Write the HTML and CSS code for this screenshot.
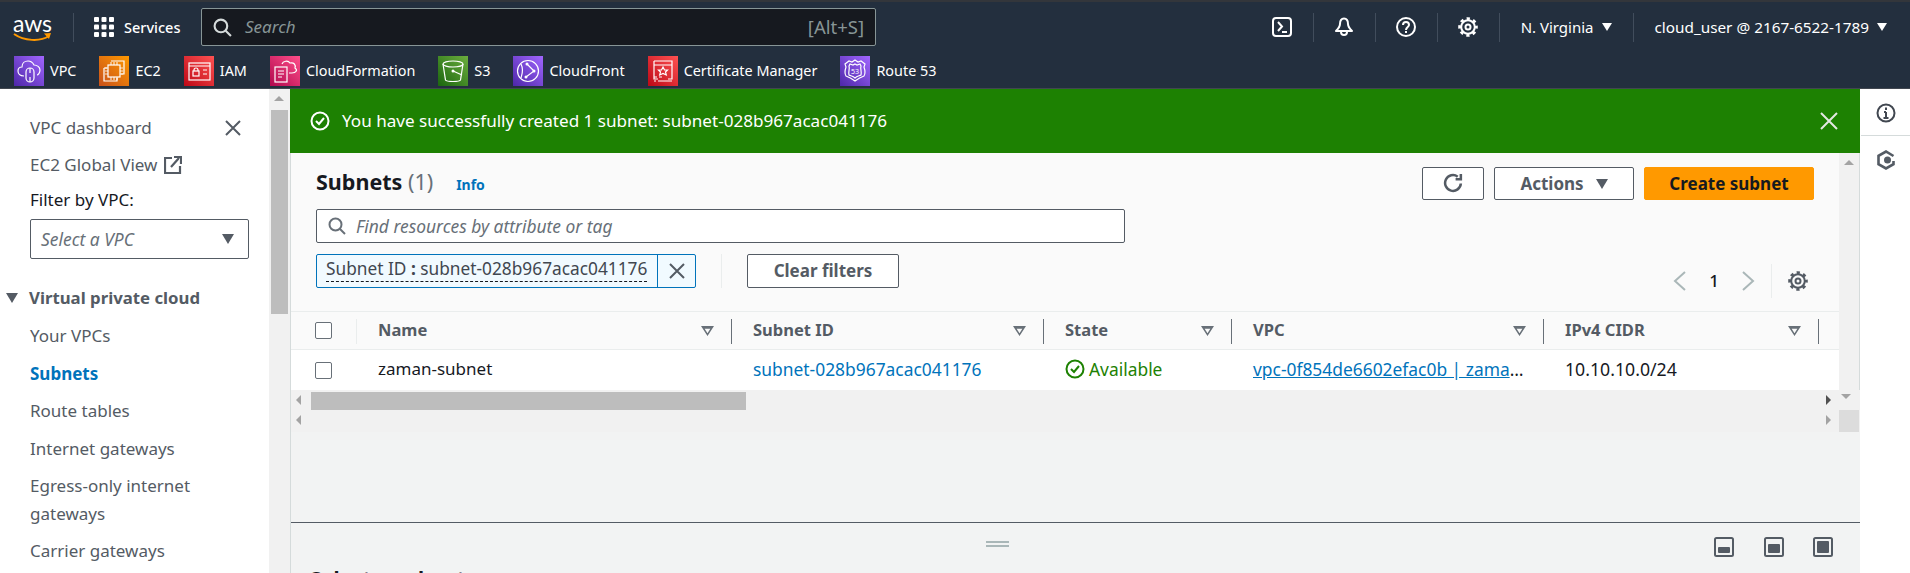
FILE: index.html
```html
<!DOCTYPE html>
<html lang="en">
<head>
<meta charset="utf-8">
<title>Subnets | VPC Console</title>
<link rel="stylesheet" href="styles.css">
</head>
<body>
<header class="top">
  <div class="top-main">
    <div class="aws-logo">
      <span class="aws-word">aws</span>
      <svg class="aws-smile" viewBox="0 0 40 12" width="40" height="12"><path d="M1 2c10 7 26 8 35 2" fill="none" stroke="#f90" stroke-width="2"/><path d="M31 1.500l7-.5-2 6z" fill="#f90"/></svg>
    </div>
    <span class="top-div div-logo"></span>
    <svg class="grid-icon" viewBox="0 0 20 20" width="20" height="20" fill="#fff"><rect x="0" y="0" width="5" height="5" rx="1"/><rect x="7.500" y="0" width="5" height="5" rx="1"/><rect x="15" y="0" width="5" height="5" rx="1"/><rect x="0" y="7.500" width="5" height="5" rx="1"/><rect x="7.500" y="7.500" width="5" height="5" rx="1"/><rect x="15" y="7.500" width="5" height="5" rx="1"/><rect x="0" y="15" width="5" height="5" rx="1"/><rect x="7.500" y="15" width="5" height="5" rx="1"/><rect x="15" y="15" width="5" height="5" rx="1"/></svg>
    <span class="services">Services</span>
    <div class="global-search">
      <svg viewBox="0 0 18 18" width="19" height="19" fill="none" stroke="#d5dbdb" stroke-width="2"><circle cx="7.500" cy="7.500" r="6"/><path d="M12 12l5 5"/></svg>
      <span class="gs-text">Search</span>
      <span class="gs-key">[Alt+S]</span>
    </div>
    <div class="top-right">
      <svg class="tool first" viewBox="0 0 20 20" width="20" height="20" fill="none" stroke="#fff" stroke-width="2"><rect x="1" y="1" width="18" height="18" rx="3"/><path d="M6 5l4 4.500L6 14M10 15h5"/></svg>
      <span class="top-div"></span>
      <svg class="tool" viewBox="0 0 20 20" width="20" height="20" fill="none" stroke="#fff" stroke-width="2"><path d="M10 1.500c-3 0-4 2.500-4 5.500 0 3-2 5-4 7h16c-2-2-4-4-4-7 0-3-1-5.500-4-5.500z" stroke-linejoin="round"/><path d="M7 15a3 3 0 0 0 6 0"/></svg>
      <span class="top-div"></span>
      <svg class="tool" viewBox="0 0 20 20" width="20" height="20" fill="none" stroke="#fff" stroke-width="2"><circle cx="10" cy="10" r="9"/><path d="M7 8c0-4 6-4 6 0 0 2-3 2-3 5"/><path d="M10 14v2"/></svg>
      <span class="top-div"></span>
      <svg class="tool" viewBox="0 0 20 20" width="20" height="20" fill="none" stroke="#fff"><circle cx="10" cy="10" r="6.800" stroke-width="2"/><circle cx="10" cy="10" r="8.300" stroke-width="3" stroke-dasharray="3.200 3.320" stroke-dashoffset="1.600"/><circle cx="10" cy="10" r="2.500" stroke-width="2"/></svg>
      <span class="top-div"></span>
      <span class="region">N. Virginia</span><span class="caret-w"></span>
      <span class="top-div acct-div"></span>
      <span class="acct">cloud_user @ 2167-6522-1789</span><span class="caret-w"></span>
    </div>
  </div>
  <nav class="fav">
    <a class="fav-item"><svg class="svc" viewBox="0 0 30 30" width="30" height="30"><defs><linearGradient id="gp" x1="0" y1="1" x2="1" y2="0"><stop offset="0" stop-color="#4d27a8"/><stop offset="1" stop-color="#a166ff"/></linearGradient><linearGradient id="go" x1="0" y1="1" x2="1" y2="0"><stop offset="0" stop-color="#c8511b"/><stop offset="1" stop-color="#f90"/></linearGradient><linearGradient id="gr" x1="0" y1="1" x2="1" y2="0"><stop offset="0" stop-color="#bd0816"/><stop offset="1" stop-color="#ff5252"/></linearGradient><linearGradient id="gm" x1="0" y1="1" x2="1" y2="0"><stop offset="0" stop-color="#b0084d"/><stop offset="1" stop-color="#ff4f8b"/></linearGradient><linearGradient id="gg" x1="0" y1="1" x2="1" y2="0"><stop offset="0" stop-color="#1b660f"/><stop offset="1" stop-color="#6cae3e"/></linearGradient></defs><rect width="30" height="30" fill="url(#gp)"/><g fill="none" stroke="#fff" stroke-width="1.200"><path d="M10 20c-4 0-6-2-6-5s2-4 4-4c0-4 3-6 6-6 3 0 5 2 6 4 3 0 6 2 6 5s-2 5-3 5"/><rect x="12" y="12" width="8" height="14" rx="4"/><path d="M16 12v5M16 21v5"/></g></svg><span>VPC</span></a>
    <a class="fav-item g-ec2"><svg class="svc" viewBox="0 0 30 30" width="30" height="30"><rect width="30" height="30" fill="url(#go)"/><g fill="none" stroke="#fff" stroke-width="1.200"><path d="M12 5h13v13h-3M5 12h3M5 12v13h13v-3"/><rect x="9" y="9" width="12" height="12"/><path d="M12 9V6M15 9V6M18 9V6M12 24v-3M15 24v-3M18 24v-3M9 12H6M9 15H6M9 18H6M21 12h3M21 15h3M21 18h3" opacity=".8"/></g></svg><span>EC2</span></a>
    <a class="fav-item g-iam"><svg class="svc" viewBox="0 0 30 30" width="30" height="30"><rect width="30" height="30" fill="url(#gr)"/><g fill="none" stroke="#fff" stroke-width="1.200"><rect x="5" y="7" width="21" height="17"/><path d="M5 10h21M19 14h4M19 18h4"/><rect x="9" y="15" width="6" height="5"/><path d="M10 15v-1a2 2 0 0 1 4 0v1"/></g></svg><span>IAM</span></a>
    <a class="fav-item g-cf"><svg class="svc" viewBox="0 0 30 30" width="30" height="30"><rect width="30" height="30" fill="url(#gm)"/><g fill="none" stroke="#fff" stroke-width="1.200"><rect x="5" y="11" width="12" height="15"/><path d="M8 15h6M8 18h6M8 21h4"/><path d="M12 8c1-3 6-4 8-1 4-1 6 2 5 5 3 2 1 5-3 5h-3"/></g></svg><span>CloudFormation</span></a>
    <a class="fav-item g-s3"><svg class="svc" viewBox="0 0 30 30" width="30" height="30"><rect width="30" height="30" fill="url(#gg)"/><g fill="none" stroke="#fff" stroke-width="1.200"><ellipse cx="15" cy="8" rx="10" ry="3"/><path d="M5 8l2.500 16c1 2 14 2 15 0L25 8"/><path d="M15 15l9 4"/></g><circle cx="15" cy="15" r="1.500" fill="#fff"/></svg><span>S3</span></a>
    <a class="fav-item g-cdn"><svg class="svc" viewBox="0 0 30 30" width="30" height="30"><rect width="30" height="30" fill="url(#gp)"/><g fill="none" stroke="#fff" stroke-width="1.200"><circle cx="15" cy="15" r="10.500"/><path d="M8 8c3 6 1 10 0 14M14 8l7 7-8 6"/></g><g fill="#fff"><circle cx="14" cy="8" r="1.500"/><circle cx="21" cy="15" r="1.500"/><circle cx="13" cy="21" r="1.500"/></g></svg><span>CloudFront</span></a>
    <a class="fav-item g-acm"><svg class="svc" viewBox="0 0 30 30" width="30" height="30"><rect width="30" height="30" fill="url(#gr)"/><g fill="none" stroke="#fff" stroke-width="1.200"><path d="M6 5h18v18h-4M6 9h18M10 23H6V5"/><path d="M15 11l1.500 3h3l-2 2 .8 3-3.300-1.500L11.700 19l.8-3-2-2h3z"/><path d="M6 21h3M11 21h3M6 25h2M10 25h14"/></g></svg><span>Certificate Manager</span></a>
    <a class="fav-item g-r53"><svg class="svc" viewBox="0 0 30 30" width="30" height="30"><rect width="30" height="30" fill="url(#gp)"/><g fill="none" stroke="#fff" stroke-width="1.200"><path d="M15 4l3 2 3-1 4 3-1 3c1 3 2 6 0 9-3 1-5 2-9 5-4-3-6-4-9-5-2-3-1-6 0-9L5 8l4-3 3 1z"/><path d="M15 8l2 1 3-1 1 2c-1 3 1 6 0 9-2 1-4 1-6 3-2-2-4-2-6-3-1-3 1-6 0-9l1-2 3 1z"/></g><text x="15" y="18" class="r53-num">53</text></svg><span>Route 53</span></a>
  </nav>
</header>

<div class="layout">
  <aside class="side">
    <div class="side-top">
      <a class="side-link">VPC dashboard</a>
      <svg class="x-big" viewBox="0 0 16 16" width="16" height="16" fill="none" stroke="#545b64" stroke-width="2"><path d="M1 1l14 14M15 1L1 15"/></svg>
    </div>
    <a class="side-link ext">EC2 Global View
      <svg viewBox="0 0 18 18" width="18" height="18" fill="none" stroke="#545b64" stroke-width="2.200"><path d="M8 2H1v15h15v-7"/><path d="M7 11l8-9M10 1h7v7" /></svg>
    </a>
    <label class="filter-label">Filter by VPC:</label>
    <div class="vpc-select"><span>Select a VPC</span><i class="caret-d"></i></div>
    <div class="side-head"><i class="caret-d"></i>Virtual private cloud</div>
    <a class="side-link sub">Your VPCs</a>
    <a class="side-link sub current">Subnets</a>
    <a class="side-link sub">Route tables</a>
    <a class="side-link sub">Internet gateways</a>
    <a class="side-link sub two">Egress-only internet gateways</a>
    <a class="side-link sub">Carrier gateways</a>
  </aside>
  <div class="side-scroll"><i class="arr up"></i><div class="side-thumb"></div></div>

  <main class="main">
    <div class="flash">
      <svg viewBox="0 0 20 20" width="20" height="20" fill="none" stroke="#fff" stroke-width="2"><circle cx="10" cy="10" r="8.500"/><path d="M6 10l3 3 5-6"/></svg>
      <span class="flash-text">You have successfully created 1 subnet: subnet-028b967acac041176</span>
      <svg class="flash-x" viewBox="0 0 18 18" width="18" height="18" fill="none" stroke="#e3e8e3" stroke-width="2"><path d="M1 1l16 16M17 1L1 17"/></svg>
    </div>
    <div class="pane">
      <div class="port">
        <section class="content">
          <div class="head">
            <div class="title-row">
              <h1 class="title">Subnets <span class="count">(1)</span></h1>
              <a class="info">Info</a>
            </div>
            <div class="actions">
              <button class="btn btn-refresh"><svg viewBox="0 0 20 20" width="21" height="21" fill="none" stroke="#545b64" stroke-width="2.400"><path d="M17 10a7.500 7.500 0 1 1-3-6.500"/><path d="M17 1v5h-5" fill="none"/></svg></button>
              <button class="btn btn-actions">Actions<i class="caret-d"></i></button>
              <button class="btn btn-primary">Create subnet</button>
            </div>
          </div>
          <div class="find">
            <svg viewBox="0 0 18 18" width="18" height="18" fill="none" stroke="#687078" stroke-width="2"><circle cx="7.500" cy="7.500" r="6"/><path d="M12 12l5 5"/></svg>
            <span>Find resources by attribute or tag</span>
          </div>
          <div class="filters">
            <div class="chip">
              <div class="chip-text"><span class="chip-label">Subnet ID <b>:</b> subnet-028b967acac041176</span></div>
              <span class="chip-x"><svg viewBox="0 0 16 16" width="16" height="16" fill="none" stroke="#545b64" stroke-width="2"><path d="M1 1l14 14M15 1L1 15"/></svg></span>
            </div>
            <span class="vsep"></span>
            <button class="btn btn-clear">Clear filters</button>
            <div class="pager">
              <svg viewBox="0 0 14 20" width="14" height="20" fill="none" stroke="#aab7b8" stroke-width="2"><path d="M12 1L2 10l10 9"/></svg>
              <span class="page-num">1</span>
              <svg viewBox="0 0 14 20" width="14" height="20" fill="none" stroke="#aab7b8" stroke-width="2"><path d="M2 1l10 9-10 9"/></svg>
              <span class="vsep pager-sep"></span>
              <svg viewBox="0 0 20 20" width="20" height="20" fill="none" stroke="#545b64"><circle cx="10" cy="10" r="6.800" stroke-width="2"/><circle cx="10" cy="10" r="8.300" stroke-width="3" stroke-dasharray="3.200 3.320" stroke-dashoffset="1.600"/><circle cx="10" cy="10" r="2.500" stroke-width="2"/></svg>
            </div>
          </div>
          <div class="thead tgrid">
            <div class="cell cell-check"><span class="cbx"></span></div>
            <div class="cell th">Name<i class="sort"></i></div>
            <div class="cell th">Subnet ID<i class="sort"></i></div>
            <div class="cell th">State<i class="sort"></i></div>
            <div class="cell th">VPC<i class="sort"></i></div>
            <div class="cell th">IPv4 CIDR<i class="sort"></i></div>
          </div>
          <div class="trow tgrid">
            <div class="cell cell-check"><span class="cbx"></span></div>
            <div class="cell">zaman-subnet</div>
            <div class="cell cell-wide"><a class="lnk">subnet-028b967acac041176</a></div>
            <div class="cell cell-wide ok"><svg viewBox="0 0 20 20" width="20" height="20" fill="none" stroke="#1d8102" stroke-width="2"><circle cx="10" cy="10" r="8.500"/><path d="M6 10l3 3 5-6"/></svg>Available</div>
            <div class="cell cell-wide"><a class="lnk under">vpc-0f854de6602efac0b | zama</a>…</div>
            <div class="cell cell-cidr">10.10.10.0/24</div>
          </div>
        </section>
        <div class="v-track"><i class="arr up"></i></div>
      </div>
      <div class="h-bars">
        <div class="h-bar"><i class="arr lt"></i><div class="h-thumb"></div><i class="arr rt dark"></i><i class="arr dn"></i></div>
        <div class="h-bar second"><i class="arr lt"></i><i class="arr rt"></i><span class="corner"></span></div>
      </div>
    </div>
    <section class="split">
      <div class="grip"></div>
      <div class="split-icons">
        <svg viewBox="0 0 20 20" width="20" height="20"><rect x="1" y="1" width="18" height="18" rx="1.500" fill="none" stroke="#545b64" stroke-width="2"/><rect x="4" y="10" width="12" height="6" rx="1" fill="#545b64"/></svg>
        <svg viewBox="0 0 20 20" width="20" height="20"><rect x="1" y="1" width="18" height="18" rx="1.500" fill="none" stroke="#545b64" stroke-width="2"/><rect x="4" y="7" width="12" height="9" rx="1" fill="#545b64"/></svg>
        <svg viewBox="0 0 20 20" width="20" height="20"><rect x="1" y="1" width="18" height="18" rx="1.500" fill="none" stroke="#545b64" stroke-width="2"/><rect x="4" y="4" width="12" height="12" rx="1" fill="#545b64"/></svg>
      </div>
      <div class="split-title">Select a subnet</div>
    </section>
  </main>

  <aside class="rail">
    <div class="rail-cell">
      <svg viewBox="0 0 20 20" width="20" height="20" fill="none" stroke="#414750" stroke-width="2"><circle cx="10" cy="10" r="8.500"/><path d="M10 9v6M7.500 15h5M8 9h2" /><path d="M10 4.500v2.500"/></svg>
    </div>
    <div class="rail-cell">
      <svg viewBox="0 0 20 20" width="20" height="20" fill="none" stroke="#545b64" stroke-width="2.600"><path d="M17.500 6L10 1.500 2.500 5.800v8.400L10 18.500l7.500-4.300V11"/><circle cx="11.500" cy="10" r="3.500" fill="#545b64" stroke="none"/></svg>
    </div>
  </aside>
</div>
</body>
</html>
```

FILE: styles.css
```css
* { box-sizing: border-box; }
html, body { margin: 0; height: 573px; overflow: hidden; }
body { background: #fff; color: #16191f; font: 400 17px/20px "Noto Sans", "Open Sans", sans-serif; }
svg { display: block; flex: none; }
i { display: block; flex: none; }
button { font: inherit; background: #fff; padding: 0; cursor: pointer; }

.top { height: 89px; background: #232f3e; border-top: 2px solid #33363b; color: #fff; border-bottom: 1px solid #414750; }
.top-main { display: flex; align-items: center; height: 44px; padding: 6px 0 0 13px; }
.aws-logo { width: 40px; height: 30px; position: relative; }
.aws-word { display: block; font: 400 23px/22px "Lato", sans-serif; color: #fff; letter-spacing: -.2px; }
.aws-smile { position: absolute; left: 0; top: 20px; }
.top-div { display: block; width: 1px; height: 29px; background: #414d5c; flex: none; }
.div-logo { margin: 0 20px; }
.grid-icon { margin-right: 10px; }
.services { font-size: 14.500px; width: 77px; font-weight: 500; }
.global-search { width: 675px; height: 38px; background: #16191f; border: 1px solid #879596; border-radius: 2px; display: flex; align-items: center; padding: 0 11px; color: #879596; font-size: 17px; }
.gs-text { margin-left: 13px; font-style: italic; flex: 1; }
.gs-key { color: #879596; font-size: 18.500px; }
.top-right { display: flex; align-items: center; margin-left: auto; font-size: 15.300px; padding-right: 23px; }
.tool { margin: 0 20.500px; }
.tool.first { margin-left: 0; }
.region { margin-left: 21px; font-size: 15px; }
.caret-w { width: 0; height: 0; border: 5px solid transparent; border-top: 8px solid #fff; border-bottom: 0; margin-left: 8px; }
.acct-div { margin-left: 21px; }
.acct { margin-left: 21px; }

.fav { display: flex; height: 42px; padding: 10px 0 0 14px; gap: 0; }
.fav-item { display: flex; align-items: center; gap: 6px; color: #fff; font-size: 14.400px; margin-right: 23px; height: 30px; }
.r53-num { font: 400 7px "Noto Sans", sans-serif; fill: #fff; text-anchor: middle; }

.layout { display: flex; height: 484px; }
.side { width: 269px; flex: none; padding: 18px 20px 0 30px; color: #545b64; }
.side-top { display: flex; justify-content: space-between; align-items: center; padding-right: 8px; height: 22px; margin-bottom: 15px; margin-top: 10px; }
.side-link { display: block; font-size: 17px; line-height: 22px; }
.side-link.ext { display: flex; gap: 7px; align-items: center; }
.filter-label { display: block; color: #16191f; margin: 13px 0 8px; font-size: 17px; line-height: 22px; }
.vpc-select { width: 219px; height: 40px; border: 1px solid #545b64; border-radius: 2px; display: flex; justify-content: space-between; align-items: center; padding: 0 14px 0 10px; font-style: italic; font-size: 17.400px; color: #687078; margin-bottom: 28px; }
.caret-d { width: 0; height: 0; border: 6px solid transparent; border-top: 10px solid #545b64; border-bottom: 0; }
.side-head { display: flex; align-items: center; gap: 11px; margin-left: -24px; font-weight: 700; font-size: 16.800px; line-height: 22px; margin-bottom: 16px; white-space: nowrap; }
.sub { margin-bottom: 15.500px; }
.sub.current { color: #0073bb; font-weight: 700; }
.sub.two { line-height: 28px; margin-top: -3.500px; margin-bottom: 12px; }
.side-scroll { width: 21px; flex: none; background: #f1f1f1; padding: 0 1px 0 2px; position: relative; }
.side-thumb { position: absolute; left: 2px; top: 21px; width: 17px; height: 204px; background: #bdbdbd; }
.arr { position: absolute; width: 0; height: 0; border: 5px solid transparent; }
.arr.up { left: 5px; top: 7px; border-bottom: 5px solid #a3a3a3; border-top: 0; }

.main { flex: none; width: 1570px; display: flex; flex-direction: column; border-left: 1px solid #d5dbdb; background: #f2f3f3; }
.flash { height: 64px; margin-left: -1px; background: #1d8102; display: flex; align-items: center; padding: 0 22px 0 20px; color: #fff; gap: 12px; font-size: 17.100px; }
.flash-text { flex: 1; }

.pane { height: 370px; display: flex; flex-direction: column; flex: none; border-bottom: 1px solid #545b64; }
.port { display: flex; height: 237px; flex: none; }
.content { width: 1548px; flex: none; background: #fafafa; }
.v-track { flex: 1; background: #f1f1f1; position: relative; border-right: 1px solid #d5dbdb; }
.head { display: flex; justify-content: space-between; padding: 14px 25px 0 25px; height: 56px; }
.title-row { display: flex; gap: 23px; align-items: baseline; padding-top: 2px; }
.title { margin: 0; font-size: 21.500px; line-height: 26px; font-weight: 700; }
.count { font-weight: 400; color: #687078; }
.info { color: #0073bb; font-size: 14px; font-weight: 700; }
.actions { display: flex; gap: 10px; }
.btn { height: 33px; border: 1px solid #545b64; border-radius: 2px; color: #545b64; font-weight: 700; display: flex; align-items: center; justify-content: center; font-size: 17px; }
.btn-refresh { width: 62px; }
.btn-actions { width: 140px; gap: 12px; }
.btn-primary { width: 170px; background: #f90; border-color: #f90; color: #16191f; }
.find { margin-left: 25px; width: 809px; height: 34px; border: 1px solid #545b64; border-radius: 2px; background: #fff; display: flex; align-items: center; gap: 10px; padding-left: 11px; color: #687078; font-style: italic; font-size: 17.400px; }
.filters { display: flex; align-items: flex-start; height: 57px; margin-top: 11px; padding-left: 25px; padding-right: 31px; }
.chip { display: flex; width: 380px; height: 34px; border: 1px solid #0073bb; border-radius: 2px; background: #f1faff; color: #414750; }
.chip-text { width: 340px; flex: none; padding-left: 9px; white-space: nowrap; font-size: 17.300px; }
.chip-label { display: inline-block; height: 26px; line-height: 26px; margin-top: 1px; border-bottom: 1px dashed #16191f; }
.chip-text b { font-weight: 700; }
.chip-x { flex: 1; border-left: 1px solid #0073bb; display: flex; align-items: center; justify-content: center; }
.vsep { display: block; width: 1px; height: 34px; background: #eaeded; flex: none; margin: 0 25px; }
.btn-clear { width: 152px; height: 34px; }
.pager { display: flex; align-items: center; margin-left: auto; margin-top: 10px; height: 34px; }
.page-num { width: 54px; text-align: center; font-weight: 500; font-size: 17px; }
.pager-sep { margin: 0 16px; }
.tgrid { display: grid; grid-template-columns: 66px 375px 312px 188px 312px 275px 20px; align-items: center; }
.thead { height: 39px; border-top: 1px solid #eaeded; border-bottom: 1px solid #eaeded; color: #545b64; font-weight: 700; font-size: 16.500px; }
.trow { height: 40px; background: #fff; }
.cell { padding-left: 21px; padding-bottom: 2px; display: flex; align-items: center; white-space: nowrap; position: relative; height: 100%; min-width: 0; }
.cell-check { padding-left: 24px; padding-bottom: 0; }
.cell-wide { font-size: 17.400px; }
.cell-cidr { font-size: 17.700px; }
.thead .cell::after { content: ""; position: absolute; right: 0; top: 7px; height: 25px; width: 1px; background: #687078; }
.thead .cell-check::after { background: #eaeded; }
.cbx { width: 17px; height: 17px; border: 1px solid #687078; border-radius: 2px; background: #fff; display: block; }
.sort { position: absolute; right: 18px; top: 14px; width: 13px; height: 10px; background: #687078; clip-path: polygon(0 0, 100% 0, 50% 100%, 50% 72%, 72% 28%, 28% 28%, 50% 72%, 50% 100%); }
.lnk { color: #0073bb; }
.under { text-decoration: underline; }
.ok { color: #1d8102; gap: 4px; }

.h-bars { background: #f1f1f1; flex: none; height: 42px; }
.h-bar { position: relative; height: 20px; }
.h-bar.second { height: 22px; }
.h-thumb { position: absolute; left: 20px; top: 2px; width: 435px; height: 18px; background: #bdbdbd; }
.arr.lt { left: 5px; top: 5px; border: 5px solid transparent; border-left: 0; border-right: 5px solid #a3a3a3; }
.arr.rt { left: 1535px; top: 5px; border: 5px solid transparent; border-right: 0; border-left: 5px solid #a3a3a3; }
.arr.rt.dark { border-left-color: #505050; }
.arr.dn { left: 1550px; top: 4px; border-bottom: 0; border-top: 5px solid #a3a3a3; }
.corner { position: absolute; left: 1548px; top: 0; width: 20px; height: 22px; background: #dcdcdc; }

.split { flex: 1; position: relative; min-height: 0; overflow: hidden; }
.grip { width: 23px; height: 6px; margin: 18px 0 0 695px; border-top: 2px solid #aab7b8; border-bottom: 2px solid #aab7b8; }
.split-icons { position: absolute; right: 27px; top: 14px; display: flex; gap: 29.500px; }
.split-title { font-weight: 700; font-size: 20.500px; line-height: 24px; margin: 20px 0 0 19px; }

.rail { flex: 1; background: #fff; border-left: 1px solid #fff; }
.rail-cell { display: flex; justify-content: center; padding-top: 14px; height: 46px; }
.rail-cell + .rail-cell { border-top: 1px solid #d5dbdb; }
```
